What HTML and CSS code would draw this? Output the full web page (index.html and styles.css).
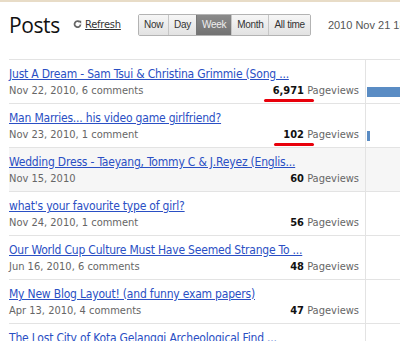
FILE: index.html
```html
<!DOCTYPE html>
<html>
<head>
<meta charset="utf-8">
<link rel="stylesheet" href="styles.css">
</head>
<body>
<div class="topline"></div>
<div class="header">
  <h1 class="title">Posts</h1>
  <a class="refresh" href="#"><svg class="ricon" width="9" height="9" viewBox="0 0 9 9"><path d="M6.8 2.2 A3 3 0 1 0 7.5 4.5" fill="none" stroke="#666" stroke-width="1.8"/><path d="M5.2 0.8 L8.2 0.8 L8.2 3.8 Z" fill="#666"/></svg><span class="rtext">Refresh</span></a>
  <div class="btns">
    <span class="btn">Now</span><span class="btn">Day</span><span class="btn sel">Week</span><span class="btn">Month</span><span class="btn">All time</span>
  </div>
  <span class="stamp">2010 Nov 21 18:00</span>
</div>
<div class="table">
  <div class="row">
    <div class="main">
      <a class="ptitle" href="#">Just A Dream - Sam Tsui &amp; Christina Grimmie (Song ...</a>
      <div class="meta"><span class="date">Nov 22, 2010, 6 comments</span><span class="views"><b class="num mark">6,971</b> Pageviews</span></div>
    </div>
    <div class="barcell"><div class="bar" style="width:200px"></div></div>
  </div>
  <div class="row">
    <div class="main">
      <a class="ptitle" href="#">Man Marries... his video game girlfriend?</a>
      <div class="meta"><span class="date">Nov 23, 2010, 1 comment</span><span class="views"><b class="num mark">102</b> Pageviews</span></div>
    </div>
    <div class="barcell"><div class="bar" style="width:3px"></div></div>
  </div>
  <div class="row alt">
    <div class="main">
      <a class="ptitle" href="#">Wedding Dress - Taeyang, Tommy C &amp; J.Reyez (Englis...</a>
      <div class="meta"><span class="date">Nov 15, 2010</span><span class="views"><b class="num">60</b> Pageviews</span></div>
    </div>
    <div class="barcell"></div>
  </div>
  <div class="row">
    <div class="main">
      <a class="ptitle" href="#">what's your favourite type of girl?</a>
      <div class="meta"><span class="date">Nov 24, 2010, 1 comment</span><span class="views"><b class="num">56</b> Pageviews</span></div>
    </div>
    <div class="barcell"></div>
  </div>
  <div class="row">
    <div class="main">
      <a class="ptitle" href="#">Our World Cup Culture Must Have Seemed Strange To ...</a>
      <div class="meta"><span class="date">Jun 16, 2010, 6 comments</span><span class="views"><b class="num">48</b> Pageviews</span></div>
    </div>
    <div class="barcell"></div>
  </div>
  <div class="row">
    <div class="main">
      <a class="ptitle" href="#">My New Blog Layout! (and funny exam papers)</a>
      <div class="meta"><span class="date">Apr 13, 2010, 4 comments</span><span class="views"><b class="num">47</b> Pageviews</span></div>
    </div>
    <div class="barcell"></div>
  </div>
  <div class="row">
    <div class="main">
      <a class="ptitle" href="#">The Lost City of Kota Gelanggi Archeological Find ...</a>
    </div>
    <div class="barcell"></div>
  </div>
</div>
</body>
</html>
```
FILE: styles.css
```css
html, body {
  margin: 0;
  padding: 0;
  background: #fff;
  overflow: hidden;
}
body {
  font-family: "DejaVu Sans Condensed", "DejaVu Sans", sans-serif;
  font-size: 11px;
  color: #555;
  width: 400px;
  height: 341px;
}
.topline {
  height: 2px;
  background: #e8dcc7;
}
.header {
  display: flex;
  align-items: center;
  height: 21px;
  padding: 12px 0 24px 9px;
  white-space: nowrap;
  overflow: hidden;
}
.title {
  flex: none;
  margin: 0;
  font-family: "Open Sans", "DejaVu Sans", sans-serif;
  font-weight: normal;
  font-size: 21px;
  color: #111;
  letter-spacing: -0.4px;
  width: 64px;
}
.refresh {
  flex: none;
  display: flex;
  align-items: center;
  color: #333;
  text-decoration: none;
  width: 65px;
}
.ricon { margin-right: 3px; }
.rtext {
  text-decoration: underline;
  font-size: 11px;
  letter-spacing: -0.2px;
}
.btns {
  flex: none;
  display: flex;
  height: 20px;
  border: 1px solid #b3b3b3;
  border-radius: 2px;
  font-family: "Liberation Sans", Arial, sans-serif;
  font-size: 10px;
  letter-spacing: -0.3px;
  color: #333;
}
.btn {
  display: flex;
  align-items: center;
  padding: 0 5px;
  background: linear-gradient(#f6f6f6, #e2e2e2);
  border-left: 1px solid #c6c6c6;
}
.btn:first-child { border-left: 0; }
.sel {
  background: linear-gradient(#8a8a8a, #727272);
  color: #eee;
  border-left-color: #777;
}
.stamp {
  flex: none;
  margin-left: 17px;
  font-family: "Liberation Sans", Arial, sans-serif;
  font-size: 11px;
  color: #555;
}
.table {
  margin-left: 9px;
  border-top: 1px solid #e3e3e3;
}
.row {
  display: flex;
  height: 43px;
  border-bottom: 1px solid #e3e3e3;
}
.row.alt { background: #f6f6f6; }
.main {
  width: 350px;
  flex: none;
  padding: 6px 6px 0 0;
  border-right: 1px solid #e3e3e3;
}
.ptitle {
  display: block;
  color: #2a4fc4;
  font-size: 12px;
  letter-spacing: -0.2px;
  line-height: 16px;
  white-space: nowrap;
}
.meta {
  display: flex;
  justify-content: space-between;
  line-height: 16px;
  margin-top: 1px;
  color: #666;
}
.views { color: #666; }
.num {
  color: #111;
  font-weight: bold;
  position: relative;
}
.mark::after {
  content: "";
  position: absolute;
  left: -9px;
  right: -10px;
  bottom: -5px;
  height: 3px;
  border-radius: 2px;
  background: #e8000b;
}
.barcell {
  flex: 1;
  padding-top: 27px;
  overflow: hidden;
}
.bar {
  height: 10px;
  background: #5a8cc4;
  margin-left: 1px;
}
```
